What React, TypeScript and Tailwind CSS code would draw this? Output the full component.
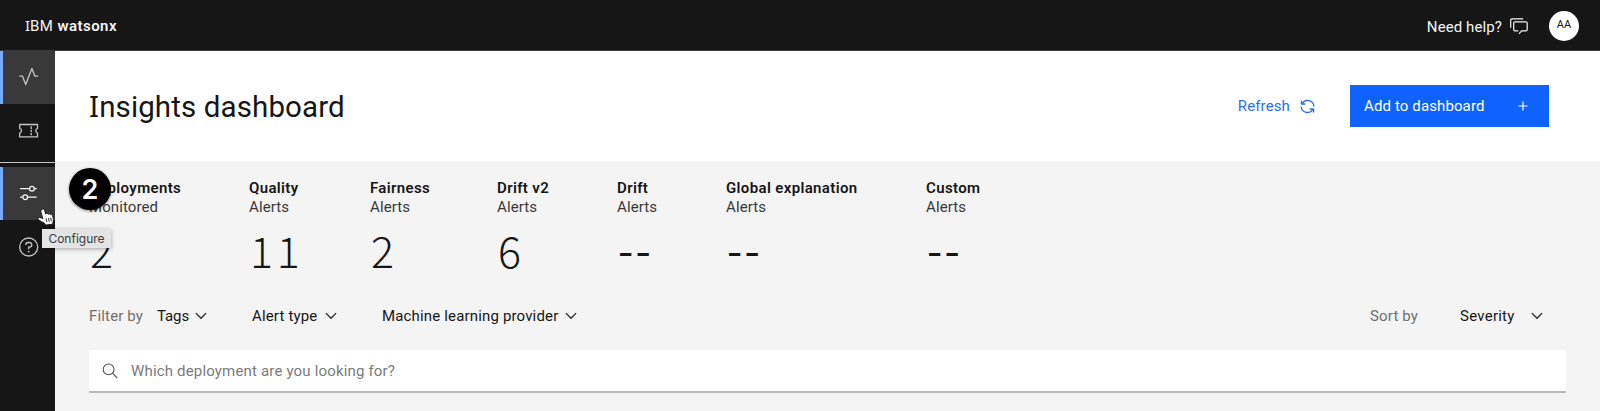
import type { ReactNode } from "react";

function Chevron({ className = "" }: { className?: string }) {
  return (
    <svg className={className} width="12" height="8" viewBox="0 0 12 8" fill="none" stroke="#262626" strokeWidth="1.3">
      <path d="M0.9 1.1 6 6.3 11.1 1.1" />
    </svg>
  );
}

function SerifI() {
  return <span className="font-['Noto_Sans']">I</span>;
}

function ActivityIcon() {
  return (
    <svg width="20" height="20" viewBox="0 0 20 20" fill="none" stroke="#c6c6c6" strokeWidth="1.3" strokeLinejoin="round">
      <path d="M.2 9.2H3.5L6.7 17.6 12.9 1.4 15.9 9.2H19" />
    </svg>
  );
}

function TicketIcon() {
  return (
    <svg width="20" height="20" viewBox="0 0 20 20" fill="none" stroke="#c6c6c6" strokeWidth="1.3">
      <path d="M.7 3.5H18.5V7.4A2.4 2.4 0 0 0 18.5 12V15.9H.7V12A2.4 2.4 0 0 0 .7 7.4Z" strokeLinejoin="round" />
      <path d="M12.2 5.3V7.9M12.2 8.7V10.9M12.2 11.7V14.3" />
    </svg>
  );
}

function SlidersIcon() {
  return (
    <svg width="20" height="20" viewBox="0 0 20 20" fill="none" stroke="#f4f4f4" strokeWidth="1.3">
      <path d="M1.1 5.7H10.4M15.4 5.7H17.7M1.1 14.2H3.7M8.7 14.2H17.7" />
      <circle cx="12.9" cy="5.7" r="2.4" />
      <circle cx="6.2" cy="14.2" r="2.4" />
    </svg>
  );
}

function HelpIcon() {
  return (
    <svg width="20" height="20" viewBox="0 0 20 20" fill="none" stroke="#c6c6c6" strokeWidth="1.3">
      <circle cx="9.7" cy="10" r="9" />
      <path d="M6.9 8.1V7.6A2.1 2.1 0 0 1 9 5.5H10.5A2.3 2.3 0 0 1 10.5 10.1H9.7V12.2" />
      <circle cx="9.7" cy="14.6" r=".95" fill="#c6c6c6" stroke="none" />
    </svg>
  );
}

function ChatIcon() {
  return (
    <svg width="18" height="17" viewBox="0 0 18 17" fill="none" stroke="#f4f4f4" strokeWidth="1.2">
      <path d="M.7 9.8V2.2A1.3 1.3 0 0 1 2 .9H13.2" />
      <path d="M9 15.8 11.6 12.9H15.9A1.3 1.3 0 0 0 17.2 11.6V5.1A1.3 1.3 0 0 0 15.9 3.8H5A1.3 1.3 0 0 0 3.7 5.1V11.6A1.3 1.3 0 0 0 5 12.9H8.3" />
    </svg>
  );
}

function RefreshIcon() {
  return (
    <svg width="15" height="15" viewBox="0 0 15 15" fill="none" stroke="#2f6fe8" strokeWidth="1.3">
      <path d="M5.3 5H2A6.3 6.3 0 0 1 13.9 7.5M1.4 1.4V5.1" />
      <path d="M9.7 10H13A6.3 6.3 0 0 1 1.1 7.5M13.6 13.6V9.9" />
    </svg>
  );
}

function HandCursor() {
  return (
    <svg className="absolute left-[37px] top-[208px] z-30" width="18" height="18" viewBox="0 0 18 18">
      <path
        d="M5.3 1.2C6.4.7 7.2 1.4 7.5 2.4L8.7 6 9.6 5.6Q10.8 5.2 11.3 6.2 12.7 5.2 13.4 6.6 15 6 15.5 7.6L16.2 10.3Q16.7 12.6 15.9 14.4L15.8 16.1 8.6 17.1 7.7 15.3Q4.5 13.8 1.6 11.8.4 10.6 1.5 9.7 2.6 9 4.2 10L5.9 10.7 3.8 3.4Q3.6 1.8 5.3 1.2Z"
        fill="#fff"
        stroke="#161616"
        strokeWidth=".9"
      />
      <path d="M9.2 10.4 9.9 14M11.5 10 12.2 13.6M13.7 9.7 14.3 13.2" stroke="#161616" strokeWidth=".9" fill="none" />
    </svg>
  );
}

function NavItem({ active = false, children }: { active?: boolean; children: ReactNode }) {
  return (
    <div
      className={
        active
          ? "flex h-[53px] items-center border-l-[3px] border-[#78a9ff] bg-[#393939] pb-px pl-[16px]"
          : "flex h-[53px] items-center pl-[19px]"
      }
    >
      {children}
    </div>
  );
}

const stats = [
  { title: "Deployments", sub: "Monitored", value: "2" },
  { title: "Quality", sub: "Alerts", value: "11" },
  { title: "Fairness", sub: "Alerts", value: "2" },
  { title: "Drift v2", sub: "Alerts", value: "6" },
  { title: "Drift", sub: "Alerts", value: "--" },
  { title: "Global explanation", sub: "Alerts", value: "--" },
  { title: "Custom", sub: "Alerts", value: "--" },
];

export default function App() {
  return (
    <div className="relative flex h-[411px] w-full flex-col overflow-hidden bg-[#f4f4f4] font-['Roboto',sans-serif] text-[15px] text-[#161616]">
      <header className="flex h-[51px] shrink-0 items-center border-b border-[#393939] bg-[#161616] pl-[25px] pr-[21px] text-[#f4f4f4]">
        <div className="whitespace-pre pt-[2px]">
          <SerifI />
          <span className="tracking-[0.4px]">BM </span>
          <span className="font-semibold tracking-[0.45px]">watsonx</span>
        </div>
        <div className="ml-auto flex items-center">
          <span className="pt-[4px] tracking-[0.1px]">Need help?</span>
          <span className="ml-[8px] pt-[3px]">
            <ChatIcon />
          </span>
          <div className="ml-[21px] mt-px flex size-[30px] items-center justify-center rounded-full bg-white text-[11px] tracking-[0.1px] text-[#161616]">AA</div>
        </div>
      </header>

      <div className="flex min-h-0 flex-1">
        <nav className="w-[55px] shrink-0 bg-[#161616]">
          <NavItem active>
            <ActivityIcon />
          </NavItem>
          <NavItem>
            <TicketIcon />
          </NavItem>
          <div className="mt-[5px] h-px bg-[#c6c6c6]" />
          <div className="mt-[4px]">
            <NavItem active>
              <SlidersIcon />
            </NavItem>
            <NavItem>
              <HelpIcon />
            </NavItem>
          </div>
        </nav>

        <main className="flex-1">
          <div className="flex h-[110px] items-center bg-white pl-[34px] pr-[51px]">
            <h1 className="whitespace-nowrap text-[29.5px] leading-[36px] tracking-[0.12px]">
              <SerifI />
              nsights dashboard
            </h1>
            <div className="ml-auto flex items-center">
              <span className="tracking-[0.12px] text-[#2f6fe8]">Refresh</span>
              <span className="ml-[10px]">
                <RefreshIcon />
              </span>
              <button className="ml-[35px] flex h-[42px] w-[199px] items-center justify-between bg-[#0f62fe] pl-[14px] pr-[21px] text-white">
                <span className="tracking-[0.12px]">Add to dashboard</span>
                <svg width="10" height="10" viewBox="0 0 10 10" stroke="#fff" strokeWidth="1.2">
                  <path d="M5 .5V9.5M.5 5H9.5" />
                </svg>
              </button>
            </div>
          </div>

          <div className="pl-[34px] pr-[34px] pt-[18px]">
            <div className="grid grid-cols-[160px_121px_127px_120px_109px_200px_160px]">
              {stats.map((s) => (
                <div key={s.title} className="whitespace-nowrap leading-[19px]">
                  <div className="font-semibold tracking-[0.36px]">{s.title}</div>
                  <div className="tracking-[0.1px] text-[#393939]">{s.sub}</div>
                  <div
                    className={
                      s.value === "--"
                        ? "mt-[7px] h-[49px] pl-[1px] font-['Noto_Sans_CJK_SC',sans-serif] text-[44px] leading-[48px] tracking-[2.2px]"
                        : "mt-[8px] h-[48px] pl-[1px] font-['Noto_Sans_CJK_SC',sans-serif] text-[43px] font-light leading-[48px] tracking-[3.8px]"
                    }
                  >
                    {s.value}
                  </div>
                </div>
              ))}
            </div>

            <div className="mt-[28px] flex h-[30px] items-center whitespace-nowrap tracking-[0.16px]">
              <span className="w-[68px] text-[#6f6f6f]">Filter by</span>
              <span className="flex w-[95px] items-center tracking-[-0.1px]">
                Tags
                <Chevron className="ml-[6px]" />
              </span>
              <span className="flex w-[130px] items-center">
                Alert type
                <Chevron className="ml-[8px]" />
              </span>
              <span className="flex items-center">
                Machine learning provider
                <Chevron className="ml-[7px]" />
              </span>
              <span className="ml-auto w-[90px] text-[#6f6f6f]">Sort by</span>
              <span className="flex w-[106px] items-center tracking-[0.25px]">
                Severity
                <Chevron className="ml-[16px]" />
              </span>
            </div>

            <div className="mt-[19px] flex h-[43px] items-center border-b-2 border-[#b8b8b8] bg-white pl-[13px]">
              <svg width="16" height="16" viewBox="0 0 16 16" fill="none" stroke="#525252" strokeWidth="1.1">
                <circle cx="6.6" cy="6.4" r="5.4" />
                <path d="M10.4 10.2 15.2 15" />
              </svg>
              <span className="ml-[13px] pt-px tracking-[0.17px] text-[#7b7b7b]">Which deployment are you looking for?</span>
            </div>
          </div>
        </main>
      </div>

      <div className="absolute left-[69px] top-[168px] z-20 flex size-[42px] items-center justify-center rounded-full bg-black font-['Inter',sans-serif] text-[27px] font-semibold leading-none text-white shadow-[0_1px_3px_rgba(0,0,0,0.45)]">
        2
      </div>
      <div className="absolute left-[42px] top-[229px] z-20 flex h-[19px] w-[69px] items-center justify-center bg-[#e4e4e4] font-['Inter',sans-serif] text-[12px] text-[#3d3d3d] shadow-[0_1px_4px_rgba(0,0,0,0.35)]">
        Configure
      </div>
      <HandCursor />
    </div>
  );
}
